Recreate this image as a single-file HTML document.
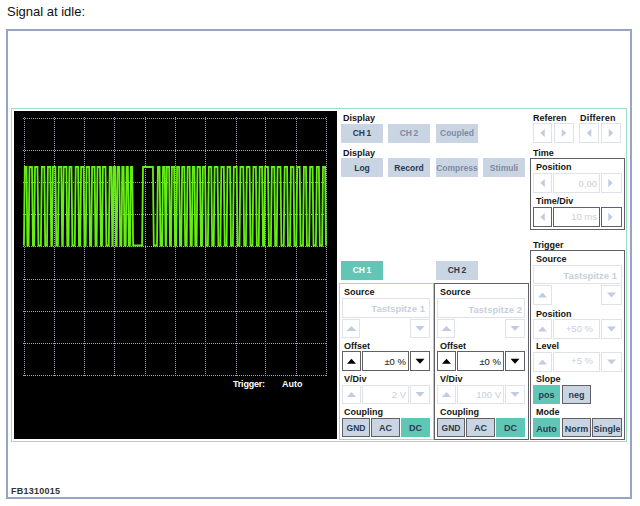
<!DOCTYPE html>
<html><head><meta charset="utf-8"><style>
html,body{margin:0;padding:0;background:#fff;width:640px;height:506px;overflow:hidden;}
body{position:relative;font-family:"Liberation Sans", sans-serif;}
.a{position:absolute;box-sizing:border-box;}
.t{position:absolute;white-space:nowrap;}
</style></head><body>
<div class="a" style="left:6px;top:29px;width:626px;height:470px;border:2px solid #97a5c2;"></div><div class="a" style="left:11px;top:108px;width:616px;height:334px;border:1px solid #9cdcc8;"></div><div class="a" style="left:14px;top:111px;width:323px;height:328px;background:#000;"></div><div class="t" style="left:7px;top:5px;font-size:13px;line-height:13px;font-weight:normal;color:#111;">Signal at idle:</div><div class="t" style="left:11px;top:487px;font-size:9px;line-height:9px;font-weight:bold;color:#333;letter-spacing:0.25px;">FB1310015</div><div class="t" style="left:233px;top:380px;font-size:9px;line-height:9px;font-weight:bold;color:#fff;letter-spacing:-0.2px;">Trigger:</div><div class="t" style="left:282px;top:380px;font-size:9px;line-height:9px;font-weight:bold;color:#fff;">Auto</div><div class="t" style="left:343px;top:114px;font-size:9px;line-height:9px;font-weight:bold;color:#141414;">Display</div><div class="a" style="left:341px;top:124px;width:42px;height:19px;background:#c9d5e3;"></div><div class="t" style="left:262px;width:200px;text-align:center;top:129px;font-size:8.5px;line-height:8.5px;font-weight:bold;color:#2a3a4e;word-spacing:-0.8px;">CH 1</div><div class="a" style="left:388px;top:124px;width:42px;height:19px;background:#c9d5e3;"></div><div class="t" style="left:309px;width:200px;text-align:center;top:129px;font-size:8.5px;line-height:8.5px;font-weight:bold;color:#7d8ba2;word-spacing:-0.8px;">CH 2</div><div class="a" style="left:436px;top:124px;width:42px;height:19px;background:#c9d5e3;"></div><div class="t" style="left:357px;width:200px;text-align:center;top:129px;font-size:8.5px;line-height:8.5px;font-weight:bold;color:#7d8ba2;">Coupled</div><div class="t" style="left:343px;top:149px;font-size:9px;line-height:9px;font-weight:bold;color:#141414;">Display</div><div class="a" style="left:341px;top:158px;width:42px;height:19px;background:#c9d5e3;"></div><div class="t" style="left:262px;width:200px;text-align:center;top:164px;font-size:8.5px;line-height:8.5px;font-weight:bold;color:#2a3a4e;">Log</div><div class="a" style="left:388px;top:158px;width:42px;height:19px;background:#c9d5e3;"></div><div class="t" style="left:309px;width:200px;text-align:center;top:164px;font-size:8.5px;line-height:8.5px;font-weight:bold;color:#2a3a4e;">Record</div><div class="a" style="left:436px;top:158px;width:42px;height:19px;background:#c9d5e3;"></div><div class="t" style="left:357px;width:200px;text-align:center;top:164px;font-size:8.5px;line-height:8.5px;font-weight:bold;color:#7d8ba2;">Compress</div><div class="a" style="left:483px;top:158px;width:42px;height:19px;background:#c9d5e3;"></div><div class="t" style="left:404px;width:200px;text-align:center;top:164px;font-size:8.5px;line-height:8.5px;font-weight:bold;color:#7d8ba2;">Stimuli</div><div class="t" style="left:533px;top:114px;font-size:9px;line-height:9px;font-weight:bold;color:#141414;">Referen</div><div class="t" style="left:580px;top:114px;font-size:9px;line-height:9px;font-weight:bold;color:#141414;letter-spacing:0.2px;">Differen</div><div class="a" style="left:533px;top:123px;width:19px;height:20px;border:1px solid #dfe2eb;"></div><div class="a" style="left:554px;top:123px;width:20px;height:20px;border:1px solid #dfe2eb;"></div><div class="a" style="left:579px;top:123px;width:20px;height:20px;border:1px solid #dfe2eb;"></div><div class="a" style="left:601px;top:123px;width:20px;height:20px;border:1px solid #dfe2eb;"></div><div class="t" style="left:533px;top:149px;font-size:9px;line-height:9px;font-weight:bold;color:#141414;">Time</div><div class="a" style="left:530px;top:158px;width:95px;height:72px;border:1px solid #606066;"></div><div class="t" style="left:536px;top:163px;font-size:9px;line-height:9px;font-weight:bold;color:#141414;">Position</div><div class="a" style="left:533px;top:173px;width:19px;height:20px;border:1px solid #dfe2eb;"></div><div class="a" style="left:553px;top:173px;width:47px;height:20px;border:1px solid #dfe2eb;"></div><div class="t" style="right:43px;top:179px;font-size:9.5px;line-height:9.5px;font-weight:normal;color:#c8d0dc;">0,00</div><div class="a" style="left:601px;top:173px;width:21px;height:20px;border:1px solid #dfe2eb;"></div><div class="t" style="left:536px;top:197px;font-size:9px;line-height:9px;font-weight:bold;color:#141414;">Time/Div</div><div class="a" style="left:533px;top:207px;width:19px;height:20px;border:1px solid #606066;"></div><div class="a" style="left:553px;top:207px;width:47px;height:20px;border:1px solid #606066;"></div><div class="t" style="right:43px;top:212px;font-size:9.5px;line-height:9.5px;font-weight:normal;color:#c8d0dc;">10 ms</div><div class="a" style="left:601px;top:207px;width:21px;height:20px;border:1px solid #606066;"></div><div class="t" style="left:533px;top:241px;font-size:9px;line-height:9px;font-weight:bold;color:#141414;">Trigger</div><div class="a" style="left:530px;top:250px;width:95px;height:190px;border:1px solid #606066;"></div><div class="t" style="left:536px;top:255px;font-size:9px;line-height:9px;font-weight:bold;color:#141414;">Source</div><div class="a" style="left:533px;top:265px;width:89px;height:19px;border:1px solid #dfe2eb;"></div><div class="t" style="right:23px;top:271px;font-size:9.5px;line-height:9.5px;font-weight:bold;color:#c8d0dc;">Tastspitze 1</div><div class="a" style="left:533px;top:285px;width:19px;height:20px;border:1px solid #dfe2eb;"></div><div class="a" style="left:601px;top:285px;width:21px;height:20px;border:1px solid #dfe2eb;"></div><div class="t" style="left:536px;top:310px;font-size:9px;line-height:9px;font-weight:bold;color:#141414;">Position</div><div class="a" style="left:533px;top:319px;width:19px;height:20px;border:1px solid #dfe2eb;"></div><div class="a" style="left:553px;top:319px;width:47px;height:20px;border:1px solid #dfe2eb;"></div><div class="t" style="right:47px;top:324px;font-size:9.5px;line-height:9.5px;font-weight:normal;color:#c8d0dc;">+50 %</div><div class="a" style="left:601px;top:319px;width:21px;height:20px;border:1px solid #dfe2eb;"></div><div class="t" style="left:536px;top:342px;font-size:9px;line-height:9px;font-weight:bold;color:#141414;">Level</div><div class="a" style="left:533px;top:352px;width:19px;height:20px;border:1px solid #dfe2eb;"></div><div class="a" style="left:553px;top:352px;width:47px;height:20px;border:1px solid #dfe2eb;"></div><div class="t" style="right:47px;top:356px;font-size:9.5px;line-height:9.5px;font-weight:normal;color:#c8d0dc;">+5 %</div><div class="a" style="left:601px;top:352px;width:21px;height:20px;border:1px solid #dfe2eb;"></div><div class="t" style="left:536px;top:375px;font-size:9px;line-height:9px;font-weight:bold;color:#141414;">Slope</div><div class="a" style="left:533px;top:385px;width:27px;height:19px;background:#62c6b6;"></div><div class="t" style="left:446.5px;width:200px;text-align:center;top:391px;font-size:9px;line-height:9px;font-weight:bold;color:#2a3a4e;">pos</div><div class="a" style="left:562px;top:385px;width:29px;height:19px;background:#c9d5e3;border:1px solid #606066;"></div><div class="t" style="left:476.5px;width:200px;text-align:center;top:391px;font-size:9px;line-height:9px;font-weight:bold;color:#2a3a4e;">neg</div><div class="t" style="left:536px;top:408px;font-size:9px;line-height:9px;font-weight:bold;color:#141414;">Mode</div><div class="a" style="left:533px;top:418px;width:27px;height:19px;background:#62c6b6;"></div><div class="t" style="left:446.5px;width:200px;text-align:center;top:425px;font-size:9px;line-height:9px;font-weight:bold;color:#2a3a4e;">Auto</div><div class="a" style="left:562px;top:418px;width:29px;height:19px;background:#c9d5e3;border:1px solid #606066;"></div><div class="t" style="left:476.5px;width:200px;text-align:center;top:425px;font-size:9px;line-height:9px;font-weight:bold;color:#2a3a4e;">Norm</div><div class="a" style="left:592px;top:418px;width:30px;height:19px;background:#c9d5e3;border:1px solid #606066;"></div><div class="t" style="left:507px;width:200px;text-align:center;top:425px;font-size:9px;line-height:9px;font-weight:bold;color:#2a3a4e;">Single</div><div class="a" style="left:341px;top:261px;width:42px;height:19px;background:#62c6b6;"></div><div class="t" style="left:262px;width:200px;text-align:center;top:266px;font-size:8.5px;line-height:8.5px;font-weight:bold;color:#fff;word-spacing:-0.8px;">CH 1</div><div class="a" style="left:436px;top:261px;width:42px;height:19px;background:#c9d5e3;"></div><div class="t" style="left:357px;width:200px;text-align:center;top:266px;font-size:8.5px;line-height:8.5px;font-weight:bold;color:#2a3a4e;word-spacing:-0.8px;">CH 2</div><div class="a" style="left:339px;top:283px;width:95px;height:157px;border:1px solid #98e884;"></div><div class="t" style="left:344px;top:288px;font-size:9px;line-height:9px;font-weight:bold;color:#141414;">Source</div><div class="a" style="left:342px;top:298px;width:88px;height:20px;border:1px solid #dfe2eb;"></div><div class="t" style="right:215px;top:304px;font-size:9.5px;line-height:9.5px;font-weight:bold;color:#c8d0dc;">Tastspitze 1</div><div class="a" style="left:342px;top:319px;width:18px;height:19px;border:1px solid #dfe2eb;"></div><div class="a" style="left:410px;top:319px;width:20px;height:19px;border:1px solid #dfe2eb;"></div><div class="t" style="left:344px;top:342px;font-size:9px;line-height:9px;font-weight:bold;color:#141414;">Offset</div><div class="a" style="left:342px;top:351px;width:19px;height:20px;border:1px solid #606066;"></div><div class="a" style="left:362px;top:351px;width:47px;height:20px;border:1px solid #606066;"></div><div class="t" style="right:234px;top:357px;font-size:9.5px;line-height:9.5px;font-weight:normal;color:#111;">&#177;0 %</div><div class="a" style="left:410px;top:351px;width:20px;height:20px;border:1px solid #606066;"></div><div class="t" style="left:344px;top:375px;font-size:9px;line-height:9px;font-weight:bold;color:#141414;">V/Div</div><div class="a" style="left:342px;top:385px;width:19px;height:19px;border:1px solid #dfe2eb;"></div><div class="a" style="left:362px;top:385px;width:47px;height:19px;border:1px solid #dfe2eb;"></div><div class="t" style="right:234px;top:390px;font-size:9.5px;line-height:9.5px;font-weight:normal;color:#c8d0dc;">2 V</div><div class="a" style="left:410px;top:385px;width:20px;height:19px;border:1px solid #dfe2eb;"></div><div class="t" style="left:344px;top:408px;font-size:9px;line-height:9px;font-weight:bold;color:#141414;">Coupling</div><div class="a" style="left:342px;top:418px;width:28px;height:19px;background:#c9d5e3;border:1px solid #606066;"></div><div class="t" style="left:256px;width:200px;text-align:center;top:424px;font-size:8.5px;line-height:8.5px;font-weight:bold;color:#2a3a4e;">GND</div><div class="a" style="left:371px;top:418px;width:29px;height:19px;background:#c9d5e3;border:1px solid #606066;"></div><div class="t" style="left:285.5px;width:200px;text-align:center;top:424px;font-size:9px;line-height:9px;font-weight:bold;color:#2a3a4e;">AC</div><div class="a" style="left:401px;top:418px;width:29px;height:19px;background:#62c6b6;"></div><div class="t" style="left:315.5px;width:200px;text-align:center;top:424px;font-size:9px;line-height:9px;font-weight:bold;color:#2a3a4e;">DC</div><div class="a" style="left:434px;top:283px;width:95px;height:157px;border:1px solid #606066;"></div><div class="t" style="left:440px;top:288px;font-size:9px;line-height:9px;font-weight:bold;color:#141414;">Source</div><div class="a" style="left:437px;top:298px;width:88px;height:20px;border:1px solid #dfe2eb;"></div><div class="t" style="right:118px;top:305px;font-size:9.5px;line-height:9.5px;font-weight:bold;color:#c8d0dc;">Tastspitze 2</div><div class="a" style="left:437px;top:319px;width:18px;height:19px;border:1px solid #dfe2eb;"></div><div class="a" style="left:505px;top:319px;width:20px;height:19px;border:1px solid #dfe2eb;"></div><div class="t" style="left:440px;top:342px;font-size:9px;line-height:9px;font-weight:bold;color:#141414;">Offset</div><div class="a" style="left:437px;top:351px;width:19px;height:20px;border:1px solid #606066;"></div><div class="a" style="left:457px;top:351px;width:47px;height:20px;border:1px solid #606066;"></div><div class="t" style="right:139px;top:357px;font-size:9.5px;line-height:9.5px;font-weight:normal;color:#111;">&#177;0 %</div><div class="a" style="left:505px;top:351px;width:20px;height:20px;border:1px solid #606066;"></div><div class="t" style="left:440px;top:375px;font-size:9px;line-height:9px;font-weight:bold;color:#141414;">V/Div</div><div class="a" style="left:437px;top:385px;width:19px;height:19px;border:1px solid #dfe2eb;"></div><div class="a" style="left:457px;top:385px;width:47px;height:19px;border:1px solid #dfe2eb;"></div><div class="t" style="right:139px;top:390px;font-size:9.5px;line-height:9.5px;font-weight:normal;color:#c8d0dc;">100 V</div><div class="a" style="left:505px;top:385px;width:20px;height:19px;border:1px solid #dfe2eb;"></div><div class="t" style="left:440px;top:408px;font-size:9px;line-height:9px;font-weight:bold;color:#141414;">Coupling</div><div class="a" style="left:437px;top:418px;width:28px;height:19px;background:#c9d5e3;border:1px solid #606066;"></div><div class="t" style="left:351px;width:200px;text-align:center;top:424px;font-size:8.5px;line-height:8.5px;font-weight:bold;color:#2a3a4e;">GND</div><div class="a" style="left:466px;top:418px;width:29px;height:19px;background:#c9d5e3;border:1px solid #606066;"></div><div class="t" style="left:380.5px;width:200px;text-align:center;top:424px;font-size:9px;line-height:9px;font-weight:bold;color:#2a3a4e;">AC</div><div class="a" style="left:496px;top:418px;width:29px;height:19px;background:#62c6b6;"></div><div class="t" style="left:410.5px;width:200px;text-align:center;top:424px;font-size:9px;line-height:9px;font-weight:bold;color:#2a3a4e;">DC</div>
<svg class="a" style="left:0;top:0" width="640" height="506"><g stroke="#9ca2ba" stroke-width="1" stroke-dasharray="1 1" shape-rendering="crispEdges"><line x1="24.5" y1="117" x2="24.5" y2="376" /><line x1="54.5" y1="117" x2="54.5" y2="376" /><line x1="84.5" y1="117" x2="84.5" y2="376" /><line x1="114.5" y1="117" x2="114.5" y2="376" /><line x1="145.5" y1="117" x2="145.5" y2="376" /><line x1="175.5" y1="117" x2="175.5" y2="376" /><line x1="205.5" y1="117" x2="205.5" y2="376" /><line x1="236.5" y1="117" x2="236.5" y2="376" /><line x1="265.5" y1="117" x2="265.5" y2="376" /><line x1="296.5" y1="117" x2="296.5" y2="376" /><line x1="326.5" y1="117" x2="326.5" y2="376" /><line x1="23" y1="118.5" x2="327" y2="118.5" /><line x1="23" y1="150.5" x2="327" y2="150.5" /><line x1="23" y1="182.5" x2="327" y2="182.5" /><line x1="23" y1="214.5" x2="327" y2="214.5" /><line x1="23" y1="246.5" x2="327" y2="246.5" /><line x1="23" y1="279.5" x2="327" y2="279.5" /><line x1="23" y1="311.5" x2="327" y2="311.5" /><line x1="23" y1="343.5" x2="327" y2="343.5" /><line x1="23" y1="375.5" x2="327" y2="375.5" /></g><polyline points="23.90,245.5 24.80,167 26.50,167 27.40,245.5 28.60,245.5 29.50,167 32.00,167 32.90,245.5 34.10,245.5 35.00,167 37.50,167 38.40,245.5 40.90,245.5 41.80,167 44.30,167 45.20,245.5 47.00,245.5 47.90,167 50.35,167 51.25,245.5 52.00,245.5 52.90,167 55.40,167 56.30,245.5 57.90,245.5 58.80,167 61.30,167 62.20,245.5 62.80,245.5 63.70,167 66.40,167 67.30,245.5 68.50,245.5 69.40,167 71.50,167 72.40,245.5 74.80,245.5 75.70,167 78.10,167 79.00,245.5 80.20,245.5 81.10,167 83.60,167 84.50,245.5 85.70,245.5 86.60,167 89.10,167 90.00,245.5 91.20,245.5 92.10,167 94.60,167 95.50,245.5 96.60,245.5 97.50,167 100.00,167 100.90,245.5 102.00,245.5 102.90,167 105.50,167 106.40,245.5 108.80,245.5 109.70,167 111.40,167 112.30,245.5 112.80,245.5 113.70,167 115.10,167 116.00,245.5 116.70,245.5 117.60,167 119.30,167 120.20,245.5 121.40,245.5 122.30,167 123.60,167 124.50,245.5 125.70,245.5 126.60,167 127.90,167 128.80,245.5 130.00,245.5 130.90,167 132.20,167 133.10,245.5 142.10,245.5 143.00,167 152.90,167 153.80,245.5 157.00,245.5 157.90,167 159.60,167 160.50,245.5 162.10,245.5 163.00,167 164.70,167 165.60,245.5 166.00,245.5 166.90,167 169.10,167 170.00,245.5 171.00,245.5 171.90,167 174.10,167 175.00,245.5 176.20,245.5 177.10,167 179.10,167 180.00,245.5 181.25,245.5 182.15,167 184.30,167 185.20,245.5 186.70,245.5 187.60,167 189.70,167 190.60,245.5 191.80,245.5 192.70,167 194.40,167 195.30,245.5 196.60,245.5 197.50,167 200.00,167 200.90,245.5 202.00,245.5 202.90,167 205.10,167 206.00,245.5 207.90,245.5 208.80,167 211.30,167 212.20,245.5 213.75,245.5 214.65,167 217.50,167 218.40,245.5 220.40,245.5 221.30,167 223.80,167 224.70,245.5 226.60,245.5 227.50,167 230.10,167 231.00,245.5 232.90,245.5 233.80,167 236.70,167 237.60,245.5 239.50,245.5 240.40,167 243.30,167 244.20,245.5 245.90,245.5 246.80,167 249.60,167 250.50,245.5 252.50,245.5 253.40,167 255.90,167 256.80,245.5 258.75,245.5 259.65,167 262.10,167 263.00,245.5 264.20,245.5 265.10,167 268.00,167 268.90,245.5 270.90,245.5 271.80,167 274.30,167 275.20,245.5 276.70,245.5 277.60,167 280.50,167 281.40,245.5 283.75,245.5 284.65,167 287.10,167 288.00,245.5 290.00,245.5 290.90,167 293.50,167 294.40,245.5 296.30,245.5 297.20,167 299.70,167 300.60,245.5 303.00,245.5 303.90,167 306.00,167 306.90,245.5 309.20,245.5 310.10,167 312.60,167 313.50,245.5 315.90,245.5 316.80,167 318.90,167 319.80,245.5 322.10,245.5 323.00,167 325.10,167 326.00,245.5" fill="none" stroke="#66ee14" stroke-width="1.8" stroke-linejoin="miter"/></svg>
<svg class="a" style="left:0;top:0" width="640" height="506"><polygon points="544.75,129.0 544.75,137.0 540.25,133" fill="#c0cce2"/><polygon points="561.75,129.0 561.75,137.0 566.25,133" fill="#c0cce2"/><polygon points="591.25,129.0 591.25,137.0 586.75,133" fill="#c0cce2"/><polygon points="608.75,129.0 608.75,137.0 613.25,133" fill="#c0cce2"/><polygon points="544.75,179.0 544.75,187.0 540.25,183" fill="#c0cce2"/><polygon points="608.25,179.0 608.25,187.0 612.75,183" fill="#c0cce2"/><polygon points="544.75,213.0 544.75,221.0 540.25,217" fill="#c0cce2"/><polygon points="608.25,213.0 608.25,221.0 612.75,217" fill="#c0cce2"/><polygon points="538.0,297.5 547.0,297.5 542.5,292.5" fill="#c0cce2"/><polygon points="607.0,292.5 616.0,292.5 611.5,297.5" fill="#c0cce2"/><polygon points="538.0,331.5 547.0,331.5 542.5,326.5" fill="#c0cce2"/><polygon points="607.0,326.5 616.0,326.5 611.5,331.5" fill="#c0cce2"/><polygon points="538.0,364.5 547.0,364.5 542.5,359.5" fill="#c0cce2"/><polygon points="607.0,359.5 616.0,359.5 611.5,364.5" fill="#c0cce2"/><polygon points="346.5,331.0 356.5,331.0 351.5,326.0" fill="#c0cce2"/><polygon points="415.5,326.0 424.5,326.0 420,331.0" fill="#c0cce2"/><polygon points="347.0,363.8 356.0,363.8 351.5,358.8" fill="#000"/><polygon points="415.5,358.8 424.5,358.8 420,363.8" fill="#000"/><polygon points="347.0,397.0 356.0,397.0 351.5,392.0" fill="#c0cce2"/><polygon points="415.5,392.0 424.5,392.0 420,397.0" fill="#c0cce2"/><polygon points="441.5,331.0 451.5,331.0 446.5,326.0" fill="#c0cce2"/><polygon points="510.5,326.0 519.5,326.0 515,331.0" fill="#c0cce2"/><polygon points="442.0,363.8 451.0,363.8 446.5,358.8" fill="#000"/><polygon points="510.5,358.8 519.5,358.8 515,363.8" fill="#000"/><polygon points="442.0,397.0 451.0,397.0 446.5,392.0" fill="#c0cce2"/><polygon points="510.5,392.0 519.5,392.0 515,397.0" fill="#c0cce2"/></svg>
</body></html>
